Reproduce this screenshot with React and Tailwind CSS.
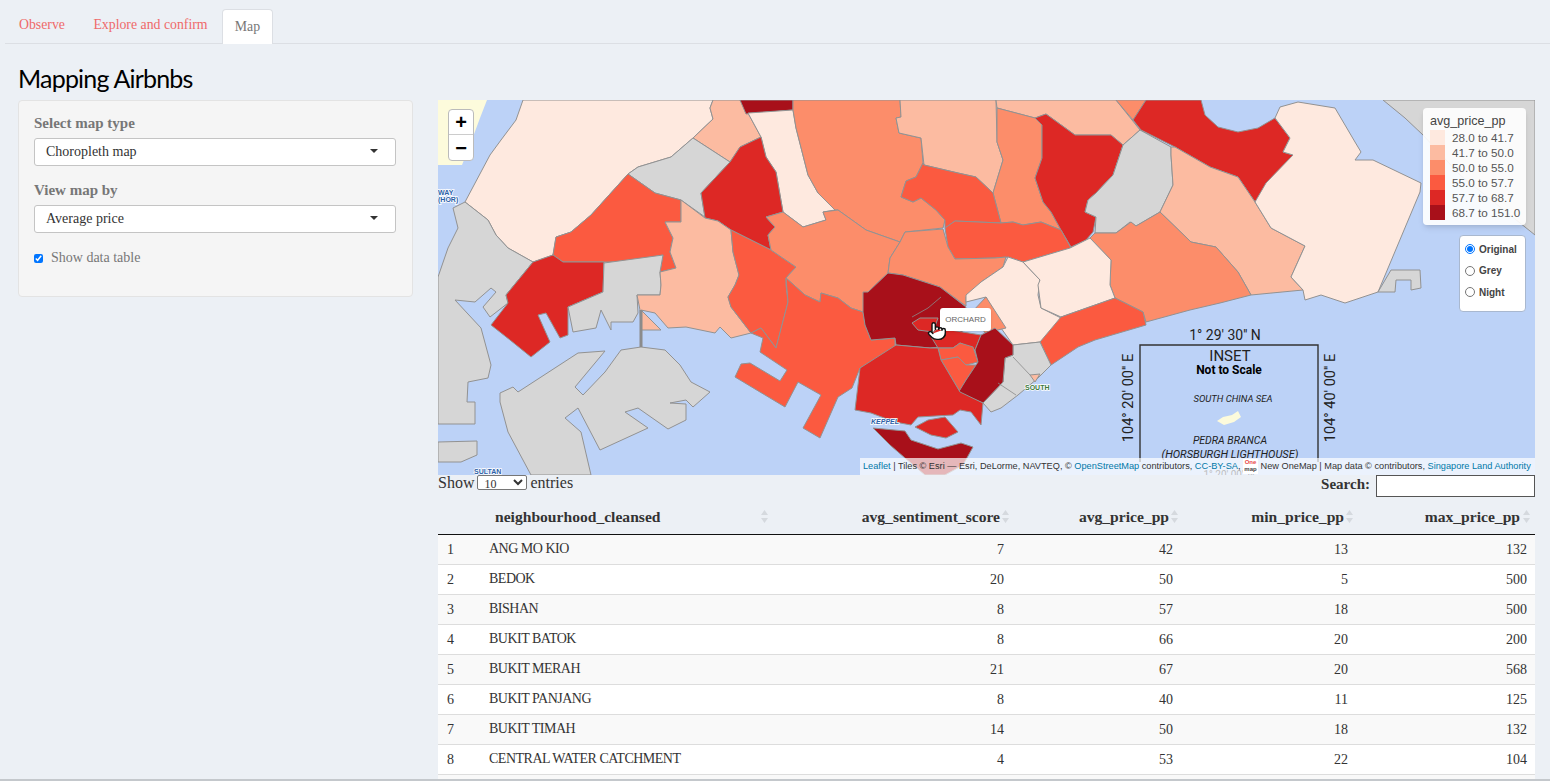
import { Pointer } from 'lucide-react'

const SERIF = { fontFamily: '"Liberation Serif", serif' }

const PALE = '#fee9df'
const S2 = '#fcbba1'
const S3 = '#fc8d6a'
const O = '#fb5a40'
const R = '#dd2825'
const D = '#a8101a'
const G = '#d6d6d6'

/* neighbourhood polygons, in page pixels (the svg viewBox starts at 438,100) */
const AREAS = [
  [G, '1383,100 1535,100 1535,235 1460,175 1423,135 1405,118'],
  [PALE, '523,100 516,120 501,140 490,155 465,202 488,220 496,235 508,248 533,262 553,255 556,237 571,232 591,215 628,174 638,167 671,157 693,138 713,119 710,108 713,100'],
  [S2, '713,100 710,108 713,119 693,138 730,162 740,147 761,137 748,113 740,100'],
  [D, '740,100 793,100 793,110 746,114'],
  [PALE, '748,113 793,110 796,128 808,175 818,193 835,210 823,212 826,220 803,227 783,212 776,172 766,157 761,137'],
  [G, '693,138 730,162 701,193 705,217 681,200 655,193 628,174 638,167 671,157'],
  [R, '761,137 766,157 776,172 783,212 766,217 775,227 768,235 771,250 731,230 718,221 705,218 701,193 730,162 740,147'],
  [O, '628,174 655,193 681,200 681,222 665,222 673,238 670,252 676,268 660,272 663,255 631,262 563,262 553,255 556,237 571,232 591,215'],
  [G, '438,277 448,248 458,228 453,208 465,202 488,220 496,235 508,248 533,262 506,295 508,303 490,317 483,307 496,292 491,288 475,302 455,300 481,328 491,365 488,378 468,382 467,402 475,402 475,424 438,424'],
  [R, '533,262 553,255 563,262 604,262 603,292 568,307 568,335 560,338 546,313 538,315 550,342 531,357 510,340 491,325 508,303 506,295'],
  [G, '604,263 663,255 660,272 661,285 660,295 637,295 638,313 633,322 611,322 611,330 601,310 596,328 573,332 568,307 603,292'],
  [S2, '681,200 705,218 718,221 731,230 733,252 739,275 735,285 728,297 731,307 751,333 731,338 720,327 715,333 686,327 668,328 655,313 641,310 661,330 641,330 640,310 637,295 660,295 661,285 660,272 676,268 670,252 673,238 665,222 681,222'],
  [O, '731,230 771,250 796,267 786,278 786,285 788,302 776,348 761,328 751,333 731,307 728,297 735,285 739,275 733,252'],
  [S3, '793,100 900,100 901,117 896,118 899,133 921,138 923,163 916,177 906,181 901,197 913,202 921,198 936,210 945,220 943,228 905,232 900,242 866,230 838,210 835,210 818,193 808,175 796,128 793,110'],
  [S3, '771,250 768,235 775,227 766,217 783,212 803,227 826,220 823,212 838,210 866,230 900,242 890,258 888,273 868,292 863,312 851,308 838,298 821,293 820,302 805,295 786,278 796,267'],
  [O, '786,278 805,295 820,302 821,293 838,298 851,308 863,312 865,325 871,340 895,338 895,348 860,368 852,388 838,397 820,438 803,428 821,395 798,382 785,407 735,377 741,364 750,363 780,381 787,370 760,352 763,338 751,333 761,328 776,348 788,302'],
  [S2, '900,100 996,100 997,142 1003,160 993,193 976,177 958,173 924,165 921,138 899,133 896,118 901,117'],
  [S2, '996,100 1116,100 1140,130 1123,145 1111,135 1075,135 1046,114 1035,118 997,108'],
  [S3, '1116,100 1146,100 1133,120'],
  [S3, '997,108 1035,118 1042,125 1042,158 1035,178 1043,202 1051,212 1061,230 1041,222 1023,225 1013,222 1001,223 993,193 1003,160 997,142'],
  [R, '1035,118 1046,114 1075,135 1111,135 1123,145 1113,175 1096,193 1088,200 1085,212 1096,217 1093,232 1086,240 1071,247 1061,230 1051,212 1043,202 1035,178 1042,158 1042,125'],
  [G, '1140,130 1171,147 1171,155 1173,185 1160,212 1136,226 1130,222 1116,233 1095,233 1096,217 1085,212 1088,200 1096,193 1113,175 1123,145'],
  [R, '1133,120 1146,100 1201,100 1205,115 1218,127 1238,132 1258,128 1275,118 1290,138 1283,152 1293,155 1271,183 1255,202 1238,177 1210,167 1175,147 1141,130'],
  [S2, '1171,147 1175,147 1210,167 1238,177 1255,202 1271,228 1305,246 1291,277 1303,290 1251,295 1238,272 1216,247 1191,242 1160,212 1173,185 1171,155'],
  [PALE, '1255,202 1266,183 1293,155 1283,152 1290,138 1275,118 1280,107 1298,102 1335,108 1355,142 1361,152 1355,160 1373,160 1421,183 1420,192 1378,292 1345,303 1321,295 1305,300 1303,290 1291,277 1305,246 1271,228'],
  [G, '1378,292 1391,270 1420,270 1421,288 1411,290 1411,280 1396,280 1395,292'],
  [S3, '1090,238 1095,233 1116,233 1131,222 1136,226 1160,212 1191,242 1216,247 1238,272 1251,295 1220,303 1190,310 1146,322 1143,312 1115,298 1110,285 1111,260'],
  [O, '924,165 958,173 976,177 993,193 1001,223 955,221 945,228 945,220 936,210 921,198 913,202 901,197 906,181 916,177 923,163'],
  [O, '945,228 955,221 1001,223 1013,222 1023,225 1041,222 1061,230 1071,248 1023,262 1008,257 995,258 955,259 948,247'],
  [S3, '900,242 905,232 943,229 948,247 955,259 995,258 1006,257 1003,267 981,282 966,297 966,306 940,287 903,275 888,273 890,258'],
  [PALE, '1008,257 1023,262 1040,280 1038,295 1041,308 1061,318 1063,332 1040,342 1013,345 1001,328 986,297 966,302 966,295 981,282 1003,267'],
  [S3, '986,297 1006,328 985,333 972,312'],
  [PALE, '1023,262 1070,248 1090,238 1111,260 1110,285 1115,298 1061,317 1041,308 1038,285 1040,280'],
  [O, '1040,342 1061,317 1115,298 1143,312 1146,325 1095,340 1078,347 1051,365'],
  [G, '1013,345 1040,342 1051,365 1038,378 1018,395 1001,408 991,412 983,403 1003,382 1005,358 1013,355'],
  [S2, '1030,375 1040,374 1035,382'],
  [D, '868,292 888,273 903,275 940,287 966,307 960,345 930,348 896,345 895,338 871,340 865,325 863,312 863,292'],
  [R, '912,323 920,318 938,318 933,332 918,330'],
  [R, '938,328 981,335 975,350 960,343 953,348 938,348 930,335'],
  [O, '938,348 953,348 960,343 973,347 978,362 966,365 958,357 941,360'],
  [O, '941,360 958,357 966,365 976,365 966,380 960,392'],
  [D, '981,335 995,328 1013,345 1013,355 1005,358 1003,382 983,403 958,393 966,380 976,365 978,362 975,350'],
  [R, '896,345 930,348 938,348 941,360 960,392 983,403 981,425 971,412 960,410 953,415 918,417 911,425 895,422 871,413 855,410 860,368'],
  [R, '915,427 928,420 945,417 958,432 946,438 931,435'],
  [D, '873,428 905,431 911,440 938,449 961,443 973,447 963,465 945,475 925,475 905,458 890,445'],
  [G, '500,393 513,387 518,392 578,353 605,351 575,387 583,395 605,372 621,350 641,347 665,350 680,365 691,382 710,392 693,407 686,400 670,403 686,404 686,420 668,429 638,408 625,412 648,428 600,450 578,408 565,418 581,432 591,475 531,475 508,432 500,402'],
  [G, '438,442 477,441 477,455 461,462 438,462'],
]

const LEGEND = [
  [PALE, '28.0 to 41.7'],
  [S2, '41.7 to 50.0'],
  [S3, '50.0 to 55.0'],
  [O, '55.0 to 57.7'],
  [R, '57.7 to 68.7'],
  [D, '68.7 to 151.0'],
]

const ROWS = [
  [1, 'ANG MO KIO', 7, 42, 13, 132],
  [2, 'BEDOK', 20, 50, 5, 500],
  [3, 'BISHAN', 8, 57, 18, 500],
  [4, 'BUKIT BATOK', 8, 66, 20, 200],
  [5, 'BUKIT MERAH', 21, 67, 20, 568],
  [6, 'BUKIT PANJANG', 8, 40, 11, 125],
  [7, 'BUKIT TIMAH', 14, 50, 18, 132],
  [8, 'CENTRAL WATER CATCHMENT', 4, 53, 22, 104],
]

function MapSvg() {
  return (
    <svg viewBox="438 100 1097 375" className="block h-full w-full">
      <rect x="438" y="100" width="1097" height="375" fill="#bcd2f7" />
      <path d="M438 100H487L480 118 470 145 462 165H438Z" fill="#fdfbdc" />
      <path d="M1535 130L1525 165 1526 180 1535 215Z" fill="#bcd2f7" />
      {AREAS.map(([fill, pts], i) => (
        <polygon key={i} points={pts} fill={fill} stroke="#929292" strokeWidth="1" strokeLinejoin="round" />
      ))}
      {/* inner boundaries */}
      <path d="M912 317L928 308 941 297M1013 357L1030 375M998 383L1016 395" fill="none" stroke="#8a8a8a" strokeWidth="0.8" />
      <path d="M641 310V347" stroke="#8b8b8b" strokeWidth="3" />
      <path d="M1229 345H1140V462M1318 462V345H1229" fill="none" stroke="#333" strokeWidth="1.4" />
      <path d="M1217 421L1223 417 1232 415 1238 411 1241 417 1234 422 1224 425Z" fill="#fdfbdc" />
      <g fontFamily='Roboto, "Liberation Sans", sans-serif' textAnchor="middle" fill="#222">
        <text x="1225" y="340" fontSize="14">1° 29' 30'' N</text>
        <text x="1230" y="361" fontSize="15">INSET</text>
        <text x="1229" y="374" fontSize="12" fontWeight="700" fill="#000">Not to Scale</text>
        <text x="1233" y="402" fontSize="9.5" fontStyle="italic">SOUTH CHINA SEA</text>
        <text x="1230" y="444" fontSize="10.5" fontStyle="italic">PEDRA BRANCA</text>
        <text x="1230" y="458" fontSize="11" fontStyle="italic">(HORSBURGH LIGHTHOUSE)</text>
        <text x="1229" y="478" fontSize="10">1° 20' 00'' N</text>
        <text transform="translate(1133 398) rotate(-90)" fontSize="14.5">104° 20' 00'' E</text>
        <text transform="translate(1335 398) rotate(-90)" fontSize="14.5">104° 40' 00'' E</text>
      </g>
      <g fontFamily='"Liberation Sans", sans-serif' fontSize="7" fontWeight="700" fill="#2b5fa8" stroke="#fff" strokeWidth="1.5" paintOrder="stroke">
        <text x="438" y="195">WAY</text>
        <text x="438" y="202">(HOR)</text>
        <text x="474" y="474">SULTAN</text>
        <text x="871" y="424" fontStyle="italic">KEPPEL</text>
        <text x="1025" y="390" fill="#3d7a3d">SOUTH</text>
      </g>
    </svg>
  )
}

function SortIcon() {
  return (
    <svg width="7" height="13" viewBox="0 0 7 13" className="shrink-0">
      <path d="M3.5 0L7 5H0Z M3.5 13L0 8H7Z" fill="#d5d9de" />
    </svg>
  )
}

function FakeSelect({ label }) {
  return (
    <div className="flex h-7 items-center justify-between rounded-[3px] border border-[#c4c4c4] bg-white pb-[2px] pl-[11px] pr-[17px] text-[14px] text-[#333]">
      {label}
      <span className="h-0 w-0 border-x-[4px] border-t-[4px] border-x-transparent border-t-[#333]" />
    </div>
  )
}

export default function App() {
  return (
    <div className="h-screen overflow-hidden border-b-2 border-[#c4c8cc] bg-[#ecf0f5] text-[#333]" style={SERIF}>
      {/* tabs */}
      <nav className="ml-[5px] flex h-11 items-end border-b border-[#dcdfe4] text-[13.8px]">
        <span className="flex h-[35px] w-[74px] items-center justify-center text-[#ef6a6a]">Observe</span>
        <span className="flex h-[35px] w-[143px] items-center justify-center text-[#ef6a6a]">Explore and confirm</span>
        <span className="relative top-px flex h-[35px] w-[51px] items-center justify-center rounded-t border border-b-0 border-[#dcdfe4] bg-white text-[#777]">Map</span>
      </nav>

      <h1 className="ml-[18px] mt-[19px] h-[37px] text-[25px] leading-[30px] tracking-[-0.8px] text-black" style={{ fontFamily: 'Lato, sans-serif' }}>
        Mapping Airbnbs
      </h1>

      <div className="flex items-start gap-[25px] pl-[18px] pr-[15px]">
        {/* sidebar */}
        <aside className="h-[197px] w-[395px] shrink-0 rounded border border-[#e3e3e3] bg-[#f5f5f5] pl-[15px] pr-4 pt-[14px]">
          <div className="mb-[7px] text-[15px] font-bold leading-4 text-[#777]">Select map type</div>
          <FakeSelect label="Choropleth map" />
          <div className="mb-[7px] mt-4 text-[15px] font-bold leading-4 text-[#777]">View map by</div>
          <FakeSelect label="Average price" />
          <label className="mt-[17px] flex items-center gap-[8px] text-[14px] leading-4 text-[#777]">
            <input type="checkbox" defaultChecked className="h-[9px] w-[9px] accent-[#0075ff]" />
            Show data table
          </label>
        </aside>

        <main className="min-w-0 flex-1">
          {/* map */}
          <div className="relative h-[375px] overflow-hidden" style={{ fontFamily: '"Liberation Sans", sans-serif' }}>
            <MapSvg />

            <div className="absolute left-[10px] top-[9px] flex w-[26px] flex-col rounded border border-[#bbb] bg-white text-black">
              <span className="flex h-[25px] items-center justify-center border-b border-[#ccc] text-[20px] font-bold leading-none">+</span>
              <span className="flex h-[25px] items-center justify-center text-[20px] font-bold leading-none">−</span>
            </div>

            <div className="absolute left-[985px] top-[8px] h-[117px] w-[103px] rounded bg-white/90 px-[7px] pt-[6px] text-[11.7px] leading-[15px] text-[#555] shadow-md">
              <div className="mb-[1px] text-[12.6px] text-[#444]">avg_price_pp</div>
              {LEGEND.map(([color, label]) => (
                <div key={label} className="flex h-[15px] items-center gap-[7px] whitespace-nowrap">
                  <span className="h-[15px] w-[15px] shrink-0" style={{ background: color }} />
                  {label}
                </div>
              ))}
            </div>

            <div className="absolute left-[1021px] top-[135px] flex h-[77px] w-[67px] flex-col gap-[9.5px] rounded border border-[#a9b8cf] bg-white pl-[5px] pt-[7px] text-[10px] font-bold text-[#444]">
              {['Original', 'Grey', 'Night'].map((name, i) => (
                <label key={name} className="flex h-[12px] items-center gap-[4px]">
                  <input type="radio" name="basemap" defaultChecked={i === 0} className="m-0 h-[10px] w-[10px] accent-[#0075ff]" />
                  {name}
                </label>
              ))}
            </div>

            <div className="absolute left-[502px] top-[208px] flex h-[23px] w-[51px] items-center justify-center rounded-[3px] bg-white text-[8px] text-[#666] shadow-sm">
              ORCHARD
            </div>
            <Pointer className="absolute left-[489px] top-[219px] h-[24px] w-[20px]" fill="#fff" stroke="#111" strokeWidth={1.7} />

            <div className="absolute bottom-0 right-0 flex h-[17px] w-[675px] items-center whitespace-nowrap bg-white/70 pl-[3px] text-[9.2px] text-[#333]">
              <span className="text-[#0078a8]">Leaflet</span>
              <span className="whitespace-pre"> | Tiles © Esri — Esri, DeLorme, NAVTEQ, © </span>
              <span className="text-[#0078a8]">OpenStreetMap</span>
              <span className="whitespace-pre"> contributors, </span>
              <span className="text-[#0078a8]">CC-BY-SA</span>
              <span className="whitespace-pre">, </span>
              <span className="flex h-[15px] w-[15px] shrink-0 flex-col items-center bg-white text-[6px] font-bold leading-[7px]">
                <span className="text-[#e8484a]">One</span>
                <span className="text-[#444]">map</span>
              </span>
              <span className="whitespace-pre"> New OneMap | Map data © contributors, </span>
              <span className="text-[#0078a8]">Singapore Land Authority</span>
            </div>
          </div>

          {/* table controls */}
          <div className="flex h-[28px] items-start justify-between">
            <div className="flex h-[15px] items-center gap-[3px] text-[16px]">
              Show
              <select defaultValue="10" className="h-[15px] w-[50px] rounded-[2px] border border-[#767676] bg-white pl-[2px] text-[12px] leading-none">
                <option value="10">10</option>
              </select>
              entries
            </div>
            <div className="flex items-start gap-[6px] text-[15px] font-bold leading-[18px]">
              Search:
              <input className="h-[22px] w-[159px] border border-[#555] bg-white" />
            </div>
          </div>

          {/* data table */}
          <table className="w-full table-fixed border-collapse text-[14px]">
            <colgroup>
              <col className="w-[45px]" />
              <col className="w-[290px]" />
              <col className="w-[239px]" />
              <col className="w-[169px]" />
              <col className="w-[175px]" />
              <col />
            </colgroup>
            <thead>
              <tr className="h-[31px] border-b border-[#111] text-[15.6px] font-bold">
                <th />
                <th className="pb-1 pl-[12px] pr-[5px]">
                  <span className="flex items-center justify-between">neighbourhood_cleansed <SortIcon /></span>
                </th>
                {['avg_sentiment_score', 'avg_price_pp', 'min_price_pp'].map((h) => (
                  <th key={h} className="pb-1 pr-[3px]">
                    <span className="flex items-center justify-end gap-[2px]">{h} <SortIcon /></span>
                  </th>
                ))}
                <th className="pb-1 pr-[5px]">
                  <span className="flex items-center justify-end gap-[3px]">max_price_pp <SortIcon /></span>
                </th>
              </tr>
            </thead>
            <tbody>
              {ROWS.map((r) => (
                <tr key={r[0]} className={`h-[30px] border-b border-[#ddd] ${r[0] % 2 ? 'bg-[#f9f9f9]' : 'bg-white'}`}>
                  <td className="pl-[9px]">{r[0]}</td>
                  <td className="pb-[2px] pl-[6px] tracking-[-0.5px]">{r[1]}</td>
                  {r.slice(2).map((v, i) => (
                    <td key={i} className="pr-[8px] text-right">{v}</td>
                  ))}
                </tr>
              ))}
              <tr className="h-[30px] bg-[#f9f9f9]"><td colSpan={6} /></tr>
            </tbody>
          </table>
        </main>
      </div>
    </div>
  )
}
